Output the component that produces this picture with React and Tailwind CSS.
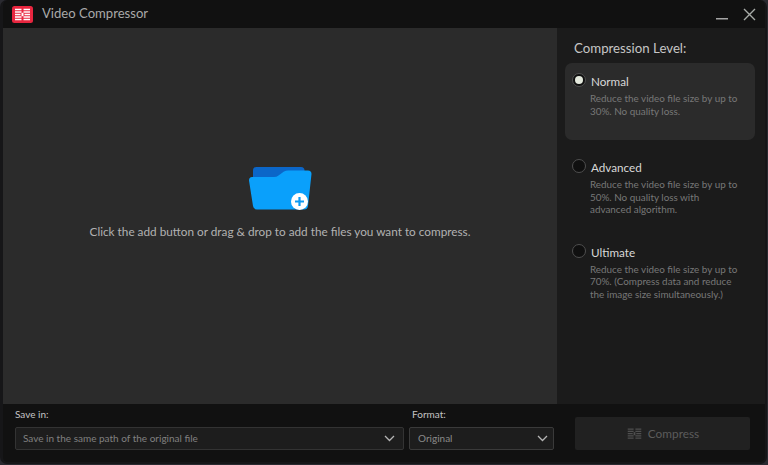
const font = { fontFamily: 'Lato, sans-serif' };

function Logo({ color = "#e8263f", line = "#fff", size = 21 }) {
  return (
    <svg width={size} height={(size * 17) / 21} viewBox="0 0 21 17" className="shrink-0">
      <rect width="21" height="17" rx="2.500" fill={color} />
      <path d="M3 3.500H9.500M3 6H9.500M3 8.500H8.500M3 11H9.500M3 13.500H9.500M11.500 3.500H18M11.500 6H18M12.500 8.500H18M11.500 11H18M11.500 13.500H18" stroke={line} strokeWidth="1.300" fill="none" />
      <rect x="9.500" y="6.800" width="2" height="3.400" fill={line} />
    </svg>
  );
}

function Chevron() {
  return (
    <svg width="11" height="7" viewBox="0 0 11 7" className="shrink-0">
      <path d="M1 1L5.500 5.500L10 1" stroke="#b5b5b5" strokeWidth="1.300" fill="none" />
    </svg>
  );
}

function Radio({ checked }) {
  return (
    <span className="flex h-[14px] w-[14px] shrink-0 items-center justify-center rounded-full border border-[#4f4f4f] bg-[#101010]">
      {checked && <span className="h-[8px] w-[8px] rounded-full bg-[#e3e8dc]" />}
    </span>
  );
}

function Option({ checked, title, children, className }) {
  return (
    <div className={className}>
      <div className="flex items-start gap-[4px]">
        <Radio checked={checked} />
        <div className="min-w-0">
          <div className="pl-[1px] text-[11.700px] leading-[16px] text-[#d8d8d8]">{title}</div>
          <div className="mt-[3px] w-[152px] text-[9.900px] leading-[12.500px] text-[#787878]">{children}</div>
        </div>
      </div>
    </div>
  );
}

export default function App() {
  return (
    <div style={font} className="h-[465px] w-[768px] overflow-hidden bg-[#2a2a30]">
      <div className="flex h-[464px] w-[767px] flex-col overflow-hidden rounded-[7px] border-b-[2px] border-l-[3px] border-r-[2px] border-[#161618] bg-[#111111]">
        <header className="flex h-[28px] shrink-0 items-center pl-[9px] pr-[9px]">
          <Logo />
          <span className="ml-[9px] text-[13.100px] text-[#a9a9a9]">Video Compressor</span>
          <svg width="12" height="2" viewBox="0 0 12 2" className="ml-auto mt-[9px]">
            <rect width="12" height="1.500" fill="#a5a5a5" />
          </svg>
          <svg width="13" height="13" viewBox="0 0 13 13" className="ml-[15px]">
            <path d="M1 1L12 12M12 1L1 12" stroke="#a8aca8" strokeWidth="1.400" fill="none" />
          </svg>
        </header>

        <main className="flex min-h-0 flex-1">
          <section className="flex w-[554px] flex-col items-center bg-[#2b2b2b] pt-[138px]">
            <svg width="64" height="46" viewBox="0 0 64 46">
              <path d="M5 4.500Q5 1 8.500 1H53Q56.500 1 56.500 4.500V20H5Z" fill="#0b66c8" />
              <path d="M1 14.500Q1 11 4 11H26Q28.500 11 30.500 9.500L36 5.500Q38 4.500 40 4.500H60Q63.500 4.500 63.500 8L60 40Q59.500 43.500 56 43.500H9Q5.500 43.500 5 40Z" fill="#0aa0fb" />
              <circle cx="51.500" cy="35.500" r="8.500" fill="#fff" />
              <path d="M51.500 31V40M47 35.500H56" stroke="#0d9af2" strokeWidth="2.200" />
            </svg>
            <p className="mt-[11px] text-[11.770px] leading-[17px] text-[#b2b2b2]">
              Click the add button or drag &amp; drop to add the files you want to compress.
            </p>
          </section>

          <aside className="min-w-0 flex-1 bg-[#1b1b1b] pl-[8px] pr-[10px]">
            <h2 className="ml-[9px] mt-[11px] text-[13.250px] font-normal leading-[18px] text-[#c6c6c6]">Compression Level:</h2>
            <Option checked title="Normal" className="mt-[6px] h-[77px] rounded-[7px] bg-[#2b2b2b] pl-[7px] pt-[10px]">
              Reduce the video file size by up to 30%. No quality loss.
            </Option>
            <Option title="Advanced" className="mt-[19px] pl-[7px]">
              Reduce the video file size by up to 50%. No quality loss with advanced algorithm.
            </Option>
            <Option title="Ultimate" className="mt-[28px] pl-[7px]">
              Reduce the video file size by up to 70%. (Compress data and reduce the image size simultaneously.)
            </Option>
          </aside>
        </main>

        <footer className="flex h-[58px] shrink-0 pl-[12px]">
          <div className="w-[389px] pt-[3px]">
            <div className="text-[10px] leading-[14px] text-[#c4c4c4]">Save in:</div>
            <div className="mt-[6px] flex h-[23px] items-center justify-between rounded-[2px] border border-[#333333] bg-[#1d1d1d] pl-[7px] pr-[8px] text-[10px] text-[#808080]">
              Save in the same path of the original file
              <Chevron />
            </div>
          </div>
          <div className="ml-[5px] w-[145px] pt-[3px]">
            <div className="pl-[3px] text-[10px] leading-[14px] text-[#c4c4c4]">Format:</div>
            <div className="mt-[6px] flex h-[23px] items-center justify-between rounded-[2px] border border-[#3a3a3a] bg-[#1d1d1d] pl-[8px] pr-[5px] text-[10px] text-[#8a8a8a]">
              Original
              <Chevron />
            </div>
          </div>
          <button className="ml-[21px] mt-[13px] flex h-[33px] w-[175px] items-center justify-center gap-[4px] rounded-[2px] bg-[#212121] pr-[1px] pt-[1px] text-[11.800px] text-[#5c5c5c]">
            <Logo color="transparent" line="#4f4f4f" size={19} />
            Compress
          </button>
        </footer>
      </div>
    </div>
  );
}
